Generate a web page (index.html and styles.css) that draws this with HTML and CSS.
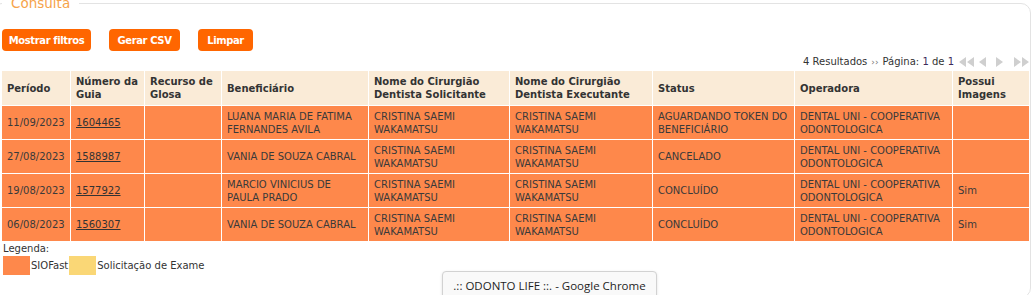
FILE: index.html
```html
<!DOCTYPE html>
<html lang="pt-BR">
<head>
<meta charset="utf-8">
<title>Consulta</title>
<link rel="stylesheet" href="styles.css">
</head>
<body>
<fieldset class="panel">
  <legend class="panel-title">Consulta</legend>
  <div class="toolbar">
    <button class="btn btn-filters">Mostrar filtros</button>
    <button class="btn btn-csv">Gerar CSV</button>
    <button class="btn btn-clear">Limpar</button>
  </div>
  <div class="pager">
    <span class="pager-count">4 Resultados</span>
    <span class="pager-sep">&#8250;&#8250;</span>
    <span class="pager-page">Página: <b class="num">1</b> de <b class="num">1</b></span>
    <span class="pager-nav">
      <svg class="ico ico-2" viewBox="0 0 18 10"><path d="M8 0 L1 5 L8 10 Z M16 0 L9 5 L16 10 Z"/></svg>
      <svg class="ico ico-1" viewBox="0 0 9 10"><path d="M8 0 L1 5 L8 10 Z"/></svg>
      <svg class="ico ico-1 gap-l" viewBox="0 0 9 10"><path d="M1 0 L8 5 L1 10 Z"/></svg>
      <svg class="ico ico-2 gap-l" viewBox="0 0 18 10"><path d="M2 0 L9 5 L2 10 Z M10 0 L17 5 L10 10 Z"/></svg>
    </span>
  </div>
  <table class="grid">
    <colgroup>
      <col style="width:68px"><col style="width:73px"><col style="width:76px"><col style="width:146px"><col style="width:140px"><col style="width:142px"><col style="width:141px"><col style="width:157px"><col>
    </colgroup>
    <thead>
      <tr>
        <th>Período</th><th>Número da Guia</th><th>Recurso de Glosa</th><th>Beneficiário</th><th>Nome do Cirurgião Dentista Solicitante</th><th>Nome do Cirurgião Dentista Executante</th><th>Status</th><th>Operadora</th><th>Possui Imagens</th>
      </tr>
    </thead>
    <tbody>
      <tr class="sio">
        <td>11/09/2023</td><td><a href="#">1604465</a></td><td></td><td>LUANA MARIA DE FATIMA FERNANDES AVILA</td><td>CRISTINA SAEMI WAKAMATSU</td><td>CRISTINA SAEMI WAKAMATSU</td><td>AGUARDANDO TOKEN DO BENEFICIÁRIO</td><td>DENTAL UNI - COOPERATIVA ODONTOLOGICA</td><td></td>
      </tr>
      <tr class="sio">
        <td>27/08/2023</td><td><a href="#">1588987</a></td><td></td><td>VANIA DE SOUZA CABRAL</td><td>CRISTINA SAEMI WAKAMATSU</td><td>CRISTINA SAEMI WAKAMATSU</td><td>CANCELADO</td><td>DENTAL UNI - COOPERATIVA ODONTOLOGICA</td><td></td>
      </tr>
      <tr class="sio">
        <td>19/08/2023</td><td><a href="#">1577922</a></td><td></td><td>MARCIO VINICIUS DE PAULA PRADO</td><td>CRISTINA SAEMI WAKAMATSU</td><td>CRISTINA SAEMI WAKAMATSU</td><td>CONCLUÍDO</td><td>DENTAL UNI - COOPERATIVA ODONTOLOGICA</td><td>Sim</td>
      </tr>
      <tr class="sio">
        <td>06/08/2023</td><td><a href="#">1560307</a></td><td></td><td>VANIA DE SOUZA CABRAL</td><td>CRISTINA SAEMI WAKAMATSU</td><td>CRISTINA SAEMI WAKAMATSU</td><td>CONCLUÍDO</td><td>DENTAL UNI - COOPERATIVA ODONTOLOGICA</td><td>Sim</td>
      </tr>
    </tbody>
  </table>
  <div class="legend">
    <div class="legend-title">Legenda:</div>
    <div class="legend-items">
      <span class="swatch swatch-sio"></span><span class="legend-label">SIOFast</span>
      <span class="swatch swatch-exam"></span><span class="legend-label">Solicitação de Exame</span>
    </div>
  </div>
</fieldset>
<div class="tooltip">.:: ODONTO LIFE ::. - Google Chrome</div>
</body>
</html>
```

FILE: styles.css
```css
html, body {
  margin: 0;
  padding: 0;
  background: #ffffff;
}
body {
  font-family: "DejaVu Sans", Verdana, sans-serif;
  font-size: 10px;
  color: #333333;
  position: relative;
  height: 295px;
  overflow: hidden;
}
.panel {
  margin: -5px 0 0 -8px;
  padding: 0 0 22px 9px;
  border: 1px solid #e3e3e3;
  border-radius: 10px;
  min-width: 0;
}
.panel-title {
  padding: 0 9px;
  font-size: 13.5px;
  line-height: 16px;
  color: #f6a34a;
}
.toolbar {
  display: flex;
  gap: 18px;
  padding-top: 18px;
}
.btn {
  height: 22px;
  padding: 0;
  border: none;
  border-radius: 4px;
  background: #ff6600;
  color: #ffffff;
  font-family: "DejaVu Sans", Verdana, sans-serif;
  font-size: 10px;
  font-weight: bold;
  letter-spacing: -0.4px;
  text-align: center;
  cursor: pointer;
}
.btn-filters { width: 89px; }
.btn-csv { width: 71px; }
.btn-clear { width: 55px; }
.pager {
  display: flex;
  justify-content: flex-end;
  align-items: center;
  height: 14px;
  margin-top: 4px;
  line-height: 14px;
  color: #333333;
}
.pager-sep {
  margin: 0 4px;
  color: #777;
  font-size: 9px;
}
.num {
  font-weight: normal;
  color: #3b2a5a;
}
.pager-nav {
  display: flex;
  align-items: center;
  margin-left: 4px;
}
.ico {
  height: 10px;
  fill: #cfcfcf;
}
.ico-2 { width: 18px; }
.ico-1 { width: 9px; margin-left: 2px; }
.gap-l { margin-left: 8px; }
.grid {
  margin-top: 1px;
  margin-left: -1px;
  width: calc(100% + 1px);
  table-layout: fixed;
  border-collapse: separate;
  border-spacing: 1px;
}
.grid th, .grid td {
  padding: 3px 5px;
  text-align: left;
  vertical-align: middle;
  line-height: 13px;
}
.grid th {
  height: 28px;
  background: #faebd7;
  font-weight: bold;
  color: #333333;
}
.grid td {
  height: 27px;
  color: #3a3a3a;
}
.sio td {
  background: #fe884b;
}
.grid a {
  color: #333333;
  text-decoration: underline;
}
.legend-title {
  line-height: 13px;
  margin-left: 1px;
}
.legend-items {
  display: flex;
  align-items: center;
  margin-top: 1px;
  margin-left: 1px;
}
.swatch {
  display: inline-block;
  width: 27px;
  height: 19px;
}
.swatch-sio { background: #fe884b; }
.swatch-exam { background: #fad776; margin-left: 1px; }
.legend-label { margin-left: 1px; }
.tooltip {
  position: absolute;
  left: 442px;
  top: 271px;
  width: 213px;
  height: 30px;
  border: 1px solid #d2d2d2;
  border-radius: 4px;
  background: #f9f9f9;
  box-shadow: 0 1px 3px rgba(0,0,0,0.12);
  font-family: "Open Sans", "Noto Sans", sans-serif;
  font-size: 11.5px;
  color: #1e1e1e;
  text-align: center;
  line-height: 28px;
}
```
